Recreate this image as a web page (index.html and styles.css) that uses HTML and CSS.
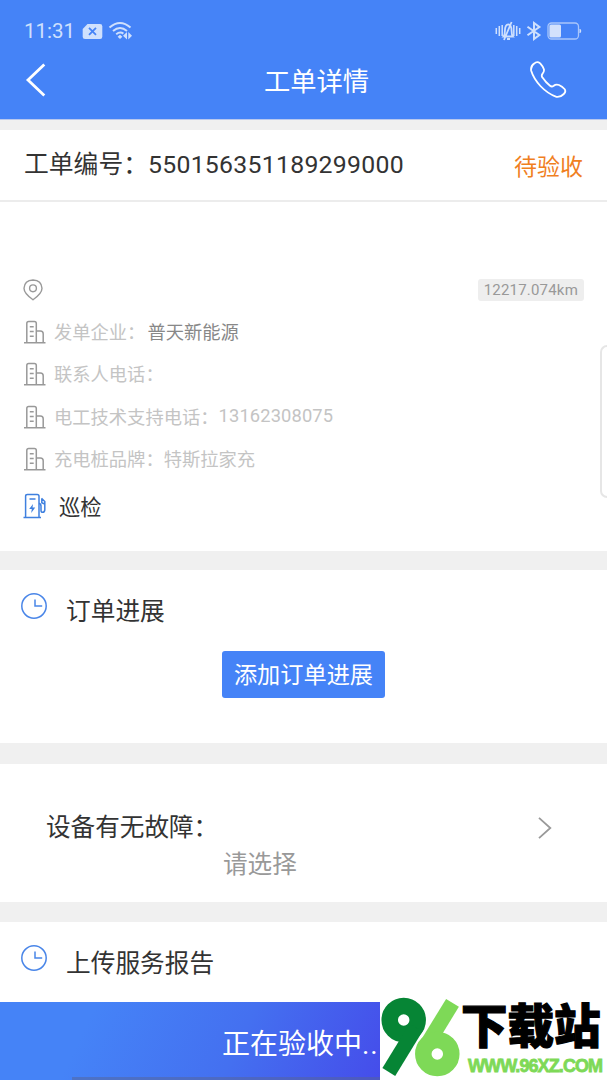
FILE: index.html
```html
<!DOCTYPE html>
<html lang="zh-CN">
<head>
  <meta charset="UTF-8" />
  <meta name="viewport" content="width=device-width, initial-scale=1.0"/>
  <title>工单详情</title>
  <link rel="stylesheet" href="styles.css">
</head>
<body>

  <!-- icons used more than once -->
  <svg class="sprite" aria-hidden="true">
    <symbol id="building" viewBox="0 0 24 24">
      <path d="M1 22.8h21.5M3.8 22.5V3.4Q3.8 1.5 5.7 1.5h5.7Q13.3 1.5 13.3 3.4v19.1M13.3 11h4.1q2.8 0 2.8 2.8v8.7M6.8 6.8h3.9M6.8 11.5h3.9M6.8 16.2h3.9"/>
    </symbol>
    <symbol id="clock" viewBox="0 0 28 28">
      <circle cx="14" cy="14" r="12.2"/>
      <path d="M15 7.5V14h7.2"/>
    </symbol>
  </svg>

  <header class="header">
    <div class="status-bar">
      <span class="time">11:31</span>
      <svg class="sim" width="21" height="17" viewBox="0 0 21 17">
        <path d="M5.5 1H18q2.3 0 2.3 2.3v10.4Q20.3 16 18 16H3Q.7 16 .7 13.7V6z" fill="#cfe0fd"/>
        <path d="M7 4.8l7 7M14 4.8l-7 7" stroke="#4583f7" stroke-width="1.8"/>
      </svg>
      <svg class="wifi" width="26" height="20" viewBox="0 0 26 20" fill="none" stroke="#cfe0fd" stroke-width="2">
        <path d="M1.5 6.6Q12 -2.7 22.5 6.6M5 10Q12 4 19 10M8.2 13.2Q12 10.2 15.4 12.6"/>
        <path d="M12 13.8l2.4 2-2.4 2.2-2.4-2.2z" fill="#cfe0fd" stroke="none"/>
        <path d="M19 11v7.5l-4-3.7zM20.3 18.5V11l3.7 3.7z" fill="#cfe0fd" stroke="none"/>
      </svg>
      <div class="status-right">
        <svg width="26" height="20" viewBox="0 0 26 20" fill="none" stroke="#cfe0fd" stroke-width="1.5">
          <path d="M1.3 7v6M4.3 5v10M7.2 4v11M24.7 7v6M21.7 5v10M18.8 4v11"/>
          <path d="M8.5 15.5q1.4-1.6 1.4-5.5Q10 3.6 13.3 3.4 16.5 3.6 16.6 10q0 4 1.3 5.5zM16.6 1L9 19M12 18h3" stroke-width="1.8"/>
        </svg>
        <svg width="16" height="20" viewBox="0 0 16 20" fill="none" stroke="#cfe0fd" stroke-width="2">
          <path d="M1.5 5.7L13.4 14 8 18V2l5.4 4L1.5 14.3"/>
        </svg>
        <svg width="35" height="20" viewBox="0 0 35 20">
          <rect x="1" y="2" width="30.5" height="16" rx="3.5" fill="none" stroke="#a9c6fb" stroke-width="1.3"/>
          <rect x="2.4" y="3.4" width="11.6" height="13.2" rx="1.5" fill="#d3e1fc"/>
          <path d="M33 8.3q1.8 1.7 0 3.4z" fill="#d3e1fc" stroke="#d3e1fc"/>
        </svg>
      </div>
    </div>
    <div class="nav-bar">
      <svg class="back" width="22" height="34" viewBox="0 0 22 34">
        <path d="M20.3 1.5L4 17l16.3 15.5" fill="none" stroke="#fff" stroke-width="2.8"/>
      </svg>
      <h1>工单详情</h1>
      <svg class="phone" width="38" height="38" viewBox="0 0 38 38">
        <path d="M5.2 2.6Q8-.2 11.2 2.4 13.8 5.2 14.9 8.3 15.4 10.7 13.6 12.7 12 14.6 13.5 16.6 16.8 21.6 21 24.8 22.8 26.2 24.7 24.8 27 22.8 30 24 33.2 25.5 35.5 28 37.4 30.5 34.8 33 31.5 36.4 27.4 35.8 19 33 11.4 25 4.5 17.5 2.2 9.8 1.3 5.4 5.2 2.6z" fill="none" stroke="#fff" stroke-width="1.8"/>
      </svg>
    </div>
  </header>

  <section class="order-no">
    <div class="number">工单编号：<span>550156351189299000</span></div>
    <div class="state">待验收</div>
  </section>

  <section class="info">
    <div class="place">
      <svg width="20" height="22" viewBox="0 0 20 22" fill="none" stroke="#999" stroke-width="1.4">
        <path d="M10 20.8Q1 14.5 1 9.3 1.4 1.4 10 1 18.6 1.4 19 9.3 19 14.5 10 20.8z"/>
        <circle cx="10" cy="9.3" r="3.4"/>
      </svg>
      <span class="distance">12217.074km</span>
    </div>
    <div class="row"><svg class="icon"><use href="#building"/></svg><span>发单企业：</span><span class="company">普天新能源</span></div>
    <div class="row"><svg class="icon"><use href="#building"/></svg><span>联系人电话：</span></div>
    <div class="row"><svg class="icon"><use href="#building"/></svg><span>电工技术支持电话：</span><span class="tel">13162308075</span></div>
    <div class="row"><svg class="icon"><use href="#building"/></svg><span>充电桩品牌：特斯拉家充</span></div>
    <div class="type">
      <svg width="24" height="26" viewBox="0 0 24 26" fill="none" stroke="#3f80df" stroke-width="1.5">
        <path d="M.5 24.5h17.5M2.6 24.2V3.2Q2.6 1.4 4.4 1.4h9.8Q16 1.4 16 3.2v21M6.5 6h6"/>
        <path d="M16 10.5q2 .2 2 2.5v4.5q0 1.8 1.7 1.8T21.8 17V8.5L18.5 5.3M18.8 5.8v4l2.8 1.2"/>
        <path d="M10 11l-3.8 5h2.6l-.6 4 4-5.4H9.5z" fill="#3f80df" stroke="none"/>
      </svg>
      <span>巡检</span>
    </div>
    <div class="drawer"></div>
  </section>

  <section class="progress">
    <h2><svg class="clock"><use href="#clock"/></svg>订单进展</h2>
    <button class="add-btn">添加订单进展</button>
  </section>

  <section class="fault">
    <div class="question">设备有无故障：
      <svg width="14" height="24" viewBox="0 0 14 24">
        <path d="M1 1.8L12.3 12 1 22.2" fill="none" stroke="#999" stroke-width="1.8"/>
      </svg>
    </div>
    <div class="select">请选择</div>
  </section>

  <section class="report">
    <h2><svg class="clock"><use href="#clock"/></svg>上传服务报告</h2>
  </section>

  <footer class="footer">
    正在验收中<span class="dots">...</span>
    <div class="site">
      <svg class="site-logo" width="82" height="82" viewBox="0 0 82 82" fill="none">
        <g stroke="#068535">
          <circle cx="23.7" cy="23" r="14" stroke-width="16.5"/>
          <path d="M8.8 75L36 30.6" stroke-width="15"/>
        </g>
        <g stroke="#7ed957">
          <path d="M72.5 5.8L45.5 50" stroke-width="15"/>
          <circle cx="57.3" cy="57" r="14" stroke-width="16.5"/>
        </g>
      </svg>
      <div class="site-text">
        <div class="site-name">下载站</div>
        <div class="site-url">WWW.96XZ.COM</div>
      </div>
    </div>
  </footer>

</body>
</html>
```

FILE: styles.css
```css
* {
  box-sizing: border-box;
}

body {
  font-family: Roboto, "Noto Sans CJK SC", sans-serif;
  background-color: #f0f0f0;
  color: #333;
  margin: 0;
  height: 1080px;
  display: flex;
  flex-direction: column;
  overflow: hidden;
}

section {
  background: #fff;
  flex-shrink: 0;
}

svg {
  flex-shrink: 0;
}

.sprite {
  position: absolute;
  width: 0;
  height: 0;
}

/* header */
.header {
  height: 120px;
  background: #4583f7;
  border-bottom: 1px solid #b9c8ee;
  color: #fff;
  flex-shrink: 0;
}

.status-bar {
  display: flex;
  align-items: center;
  height: 42px;
  padding: 20px 25px 0 24px;
}

.time {
  font-size: 20.5px;
  line-height: 22px;
  color: #cfe0fd;
}

.sim {
  margin-left: 7px;
}

.wifi {
  margin-left: 5px;
}

.status-right {
  display: flex;
  gap: 5px;
  margin-left: auto;
}

.nav-bar {
  display: flex;
  align-items: center;
  justify-content: space-between;
  height: 76px;
  padding: 0 40px 0 24px;
}

h1 {
  margin: 3px 0 0 58px;
  font-size: 26.3px;
  line-height: 36px;
  font-weight: 400;
}

/* order number */
.order-no {
  display: flex;
  justify-content: space-between;
  align-items: center;
  height: 72px;
  margin-top: 10px;
  padding: 0 24px;
  border-bottom: 2px solid #ececec;
}

.number {
  font-size: 24.8px;
  line-height: 36px;
}

.number span {
  letter-spacing: 0.28px;
}

.state {
  font-size: 23px;
  line-height: 34px;
  margin-top: 6px;
  color: #f0801f;
}

/* order info */
.info {
  position: relative;
  height: 349px;
  padding: 77px 23px 0;
}

.place {
  display: flex;
  align-items: center;
  justify-content: space-between;
  height: 22px;
  margin-bottom: 10px;
}

.distance {
  padding: 0 6px;
  border-radius: 3px;
  background: #eee;
  color: #999;
  font-size: 15px;
  line-height: 22px;
  letter-spacing: 0.2px;
}

.row {
  display: flex;
  align-items: center;
  height: 42.3px;
  font-size: 18.3px;
  color: #c4c4c4;
}

.row span {
  margin-top: -2px;
}

.icon {
  width: 24px;
  height: 24px;
  margin-right: 7px;
  fill: none;
  stroke: #999;
  stroke-width: 1.5;
}

.company {
  margin-left: 2px;
  color: #888;
}

.tel {
  letter-spacing: 0.15px;
}

.type {
  display: flex;
  align-items: center;
  gap: 12px;
  height: 52px;
  font-size: 21.3px;
}

.type span {
  margin-top: -2px;
}

/* closed side drawer, only its edge is on screen */
.drawer {
  position: absolute;
  top: 143px;
  right: 0;
  width: 7px;
  height: 153px;
  border: 2px solid #e6e6e6;
  border-right: none;
  border-radius: 7px 0 0 7px;
}

/* sections */
h2 {
  display: flex;
  align-items: center;
  margin: 0;
  font-size: 24.7px;
  line-height: 36px;
  font-weight: 400;
}

.clock {
  width: 28px;
  height: 28px;
  margin: -12px 18px 0 20px;
  fill: none;
  stroke: #4a86e8;
  stroke-width: 1.5;
}

.progress {
  height: 173px;
  margin-top: 19px;
  padding-top: 24px;
}

.add-btn {
  display: block;
  width: 163px;
  height: 47px;
  margin: 21px 0 0 222px;
  padding: 0 0 3px;
  border: none;
  border-radius: 3px;
  background: #4583f7;
  color: #fff;
  font-family: inherit;
  font-size: 23.2px;
}

.fault {
  height: 138px;
  margin-top: 21px;
  padding: 45px 55px 0 46px;
  font-size: 24.6px;
  line-height: 37px;
}

.question {
  display: flex;
  align-items: center;
  justify-content: space-between;
}

.select {
  margin-left: 177px;
  color: #999;
}

.report {
  height: 80px;
  margin-top: 20px;
  padding-top: 24px;
}

/* footer */
.footer {
  position: relative;
  height: 78px;
  padding-left: 222px;
  flex-shrink: 0;
  background: linear-gradient(115deg, #4583f7 15%, #4470f0 40%, #454bea 66%);
  color: #fff;
  font-size: 28px;
  line-height: 85px;
}

.footer::after {
  content: '';
  position: absolute;
  left: 72px;
  bottom: 0;
  width: 308px;
  height: 3px;
  background: rgba(85, 100, 150, 0.5);
}

.dots {
  letter-spacing: 0.9px;
}

.site {
  position: absolute;
  right: 0;
  bottom: 0;
  display: flex;
  width: 227px;
  height: 83px;
  background: #fff;
}

.site-text {
  padding-top: 2px;
  white-space: nowrap;
}

.site-name {
  margin-left: -1px;
  color: #000;
  font-size: 46.5px;
  line-height: 57px;
  font-weight: 900;
  -webkit-text-stroke: 1.2px #000;
}

.site-url {
  margin-left: 6px;
  color: #7ed957;
  font-family: "Liberation Sans", sans-serif;
  font-size: 18px;
  line-height: 20px;
  font-weight: 700;
  letter-spacing: -0.9px;
  -webkit-text-stroke: 0.8px #7ed957;
}
```
